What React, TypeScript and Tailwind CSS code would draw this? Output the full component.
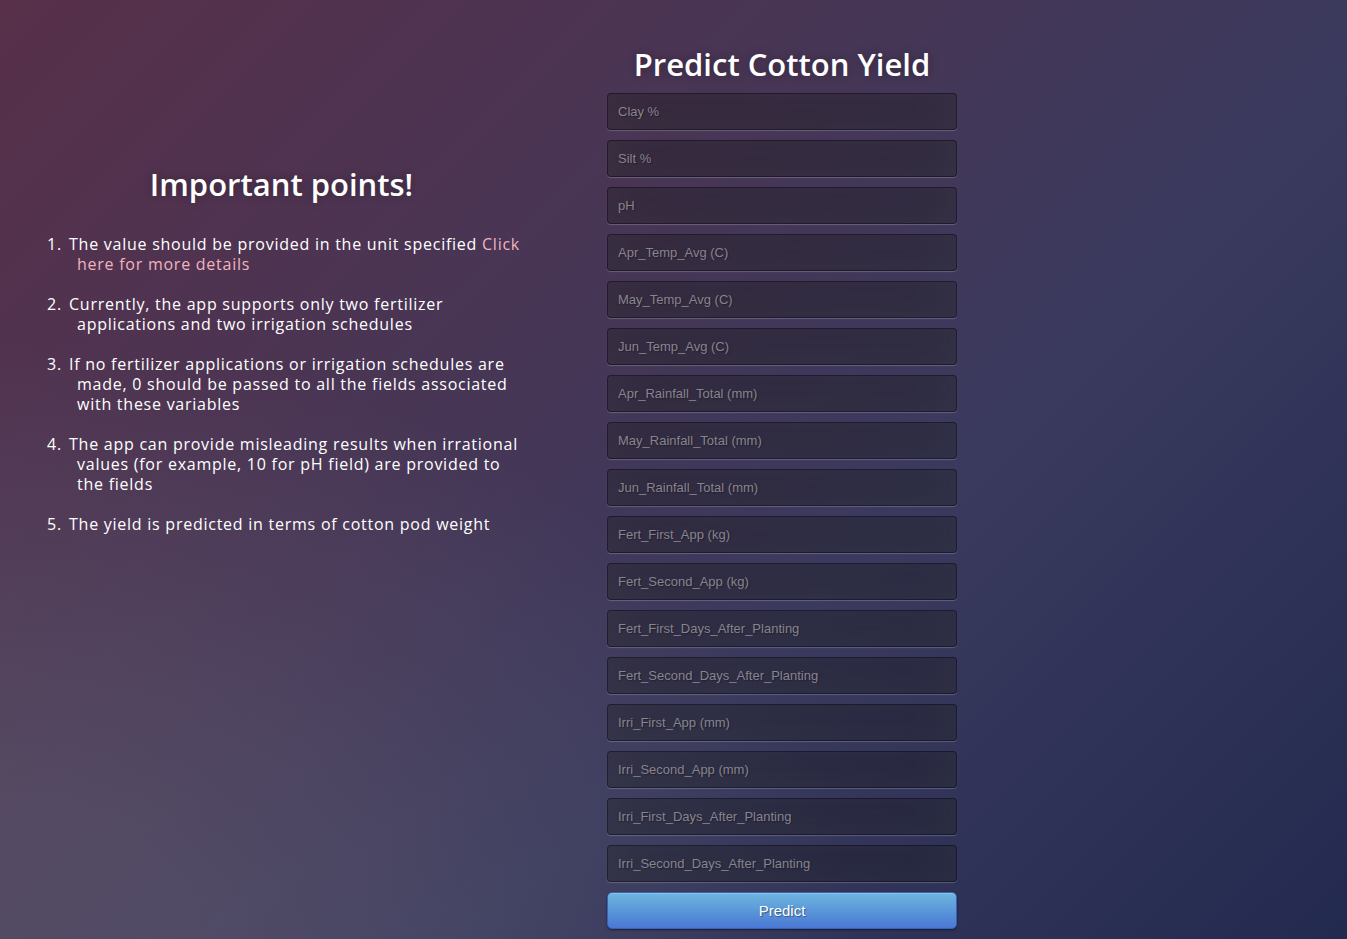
import React from "react";

const fields = [
  "Clay %",
  "Silt %",
  "pH",
  "Apr_Temp_Avg (C)",
  "May_Temp_Avg (C)",
  "Jun_Temp_Avg (C)",
  "Apr_Rainfall_Total (mm)",
  "May_Rainfall_Total (mm)",
  "Jun_Rainfall_Total (mm)",
  "Fert_First_App (kg)",
  "Fert_Second_App (kg)",
  "Fert_First_Days_After_Planting",
  "Fert_Second_Days_After_Planting",
  "Irri_First_App (mm)",
  "Irri_Second_App (mm)",
  "Irri_First_Days_After_Planting",
  "Irri_Second_Days_After_Planting",
];

const points = [
  "Currently, the app supports only two fertilizer applications and two irrigation schedules",
  "If no fertilizer applications or irrigation schedules are made, 0 should be passed to all the fields associated with these variables",
  "The app can provide misleading results when irrational values (for example, 10 for pH field) are provided to the fields",
  "The yield is predicted in terms of cotton pod weight",
];

function Num({ n }: { n: number }) {
  return <span className="inline-block w-[22px] indent-0">{n}.</span>;
}

export default function App() {
  return (
    <div className="min-h-screen w-full bg-[radial-gradient(ellipse_at_0%_100%,rgba(110,112,125,0.35)_10%,rgba(110,112,125,0)_45%),linear-gradient(135deg,#58304a_0%,#463656_40%,#3a3a5e_62%,#232a4f_100%)] bg-[#2a2c50] font-['Open_Sans',sans-serif] text-white">
      <div className="flex">
        {/* left: notes */}
        <div className="w-[563px] pt-[164px]">
          <h1 className="text-center text-[31px] font-semibold leading-[40px] [text-shadow:0_0_10px_rgba(0,0,0,0.3)]">
            Important points!
          </h1>
          <ol className="mt-[30px] ml-[47px] w-[478px] flex flex-col gap-[20px] text-[16px] leading-[20px] tracking-[0.75px]">
            <li className="pl-[30px] -indent-[30px]">
              <Num n={1} />
              The value should be provided in the unit specified{" "}
              <a href="#" className="text-[#f0b3c0]">Click here for more details</a>
            </li>
            {points.map((p, i) => (
              <li key={i} className="pl-[30px] -indent-[30px]">
                <Num n={i + 2} />
                {p}
              </li>
            ))}
          </ol>
        </div>

        {/* right: form */}
        <div className="ml-[44px] w-[350px] pt-[44px]">
          <h1 className="text-center text-[31px] font-semibold leading-[40px] [text-shadow:0_0_10px_rgba(0,0,0,0.3)]">
            Predict Cotton Yield
          </h1>
          <form className="mt-[9px] flex flex-col gap-[10px]">
            {fields.map((f) => (
              <input
                key={f}
                placeholder={f}
                className="h-[37px] w-full rounded-[4px] border border-black/30 bg-black/30 px-[10px] font-['Liberation_Sans',Arial,sans-serif] text-[13px] text-white outline-none shadow-[inset_0_-5px_45px_rgba(100,100,100,0.2),0_1px_1px_rgba(255,255,255,0.2)] [text-shadow:1px_1px_1px_rgba(0,0,0,0.3)] placeholder:text-[#88848f]"
              />
            ))}
            <button
              type="button"
              className="h-[37px] w-full rounded-[5px] border border-[#3762bc] bg-gradient-to-b from-[#6eb6de] to-[#4a77d4] pt-[1px] font-['Liberation_Sans',Arial,sans-serif] text-[15px] text-white shadow-[inset_0_1px_0_rgba(255,255,255,0.2),0_1px_2px_rgba(0,0,0,0.5)] [text-shadow:1px_1px_1px_rgba(0,0,0,0.4)]"
            >
              Predict
            </button>
          </form>
        </div>
      </div>
    </div>
  );
}
